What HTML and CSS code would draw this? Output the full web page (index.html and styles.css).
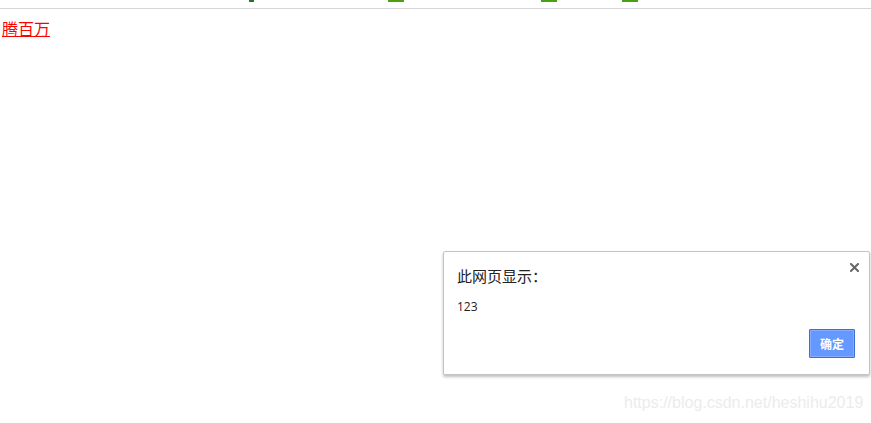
FILE: index.html
```html
<!DOCTYPE html>
<html lang="zh">
<head>
<meta charset="utf-8">
<link rel="stylesheet" href="styles.css">
</head>
<body>
<div class="topbar">
  <span class="mark m1"></span>
  <span class="mark m2"></span>
  <span class="mark m3"></span>
  <span class="mark m4"></span>
</div>
<main class="content">
  <a class="link" href="#">腾百万</a>
</main>
<div class="dialog">
  <div class="dialog-head">
    <span class="dialog-title">此网页显示：</span>
    <svg class="close" width="9" height="9" viewBox="0 0 9 9"><path d="M1 1L8 8M8 1L1 8" stroke="#666" stroke-width="2" stroke-linecap="square"/></svg>
  </div>
  <div class="dialog-msg">123</div>
  <div class="dialog-foot">
    <button class="ok">确定</button>
  </div>
</div>
<div class="watermark">https://blog.csdn.net/heshihu2019</div>
</body>
</html>
```
FILE: styles.css
```css
html, body {
  margin: 0;
  padding: 0;
  background: #fff;
  width: 871px;
  height: 423px;
  overflow: hidden;
  font-family: "Noto Sans CJK SC", "Noto Sans", sans-serif;
}
.topbar {
  position: relative;
  height: 8px;
  border-bottom: 1px solid #d6d6d6;
}
.mark {
  position: absolute;
  top: 0;
  height: 2px;
  background: #4aa00e;
}
.m1 { left: 249px; width: 5px; background: #1f7a1f; }
.m2 { left: 388px; width: 16px; }
.m3 { left: 541px; width: 16px; }
.m4 { left: 622px; width: 16px; }
.content {
  padding: 7px 2px;
}
.link {
  color: #ff0000;
  font-size: 16px;
  line-height: 20px;
  text-decoration: underline;
}
.dialog {
  position: absolute;
  left: 443px;
  top: 251px;
  width: 425px;
  height: 122px;
  border: 1px solid #c4c4c4;
  border-radius: 2px;
  box-shadow: 0 2px 3px rgba(0,0,0,0.25);
  background: #fff;
  display: flex;
  flex-direction: column;
  padding: 0;
}
.dialog-head {
  display: flex;
  justify-content: space-between;
  align-items: flex-start;
  padding: 13px 10px 0 13px;
}
.dialog-title {
  font-size: 15px;
  line-height: 22px;
  color: #222;
}
.close {
  margin-top: -2px;
}
.dialog-msg {
  padding: 12px 13px 0;
  font-size: 12px;
  line-height: 16px;
  color: #222;
  font-family: "Open Sans", "Noto Sans", sans-serif;
}
.dialog-foot {
  display: flex;
  justify-content: flex-end;
  padding: 0 14px 0 0;
  margin-top: 14px;
}
.ok {
  width: 46px;
  height: 29px;
  background: #6699ff;
  border: 1px solid #3d6fd6;
  border-radius: 1px;
  color: #fff;
  font-size: 12px;
  font-weight: bold;
  font-family: "Noto Sans CJK SC", sans-serif;
  padding: 0;
  box-shadow: inset 0 0 0 1px #85adff;
}
.watermark {
  position: absolute;
  left: 624px;
  top: 394px;
  font-family: "Liberation Sans", Arial, sans-serif;
  font-size: 16px;
  color: #ececec;
  white-space: nowrap;
}
```
